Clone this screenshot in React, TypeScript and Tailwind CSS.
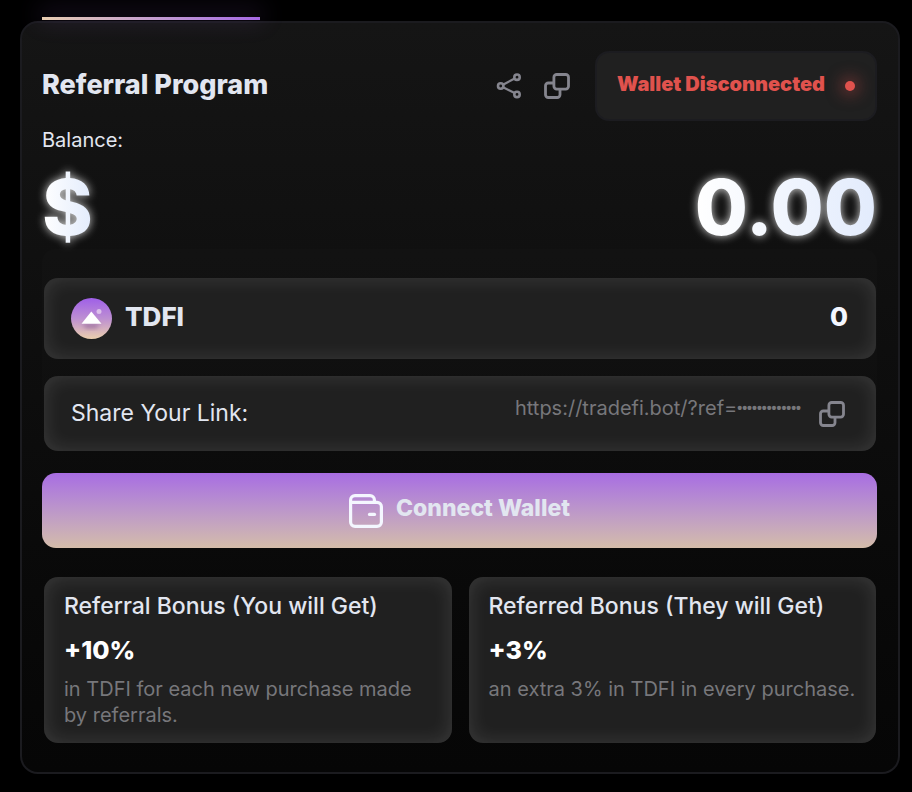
import { ReactNode } from "react";
import clsx from "clsx";

const CopyIcon = () => (
  <svg
    className="size-[26px]"
    viewBox="0 0 26 26"
    fill="none"
    stroke="currentColor"
    strokeWidth="2.8"
    strokeLinejoin="round"
    aria-hidden="true"
  >
    <rect x="9.9" y="1.5" width="14.6" height="14.6" rx="2.8" />
    <path d="M9.9 10H4.3a2.8 2.8 0 0 0-2.8 2.8v8.9a2.8 2.8 0 0 0 2.8 2.8h8.9a2.8 2.8 0 0 0 2.8-2.8v-5.6" />
  </svg>
);

const ShareIcon = () => (
  <svg
    className="size-[26px]"
    viewBox="0 0 26 26"
    fill="none"
    stroke="currentColor"
    strokeWidth="2.6"
    aria-hidden="true"
  >
    <circle cx="4.7" cy="13" r="2.7" />
    <circle cx="21" cy="4.2" r="2.7" />
    <circle cx="21" cy="21.4" r="2.7" />
    <path d="M7 11.7 18.6 5.5M7 14.3l11.6 5.8" strokeWidth="2.2" />
  </svg>
);

const WalletIcon = () => (
  <svg
    className="size-[34px]"
    viewBox="0 0 34 34"
    fill="none"
    stroke="currentColor"
    strokeWidth="3.2"
    strokeLinecap="round"
    strokeLinejoin="round"
    aria-hidden="true"
  >
    <path d="M1.6 8.4V28a4.4 4.4 0 0 0 4.4 4.4h22a4.4 4.4 0 0 0 4.4-4.4V12.8a4.4 4.4 0 0 0-4.4-4.4H1.6V6A4.4 4.4 0 0 1 6 1.6h15A4.4 4.4 0 0 1 25.4 6v2.4" />
    <path d="M20.5 20.4h5" />
  </svg>
);

const TokenIcon = () => (
  <svg className="size-[41px]" viewBox="0 0 41 41" aria-hidden="true">
    <defs>
      <linearGradient id="coin" x1="0" y1="0" x2="0" y2="1">
        <stop offset="0" stopColor="#9f5fe8" />
        <stop offset="0.5" stopColor="#bd8fd2" />
        <stop offset="1" stopColor="#ebcfad" />
      </linearGradient>
      <filter id="soft" x="-50%" y="-50%" width="200%" height="200%">
        <feGaussianBlur stdDeviation="2" />
      </filter>
    </defs>
    <circle cx="20.5" cy="20.5" r="20.5" fill="url(#coin)" />
    <path d="M11 25.5h18l-4 5H15z" fill="#7b4d86" opacity="0.5" filter="url(#soft)" />
    <path d="M20.3 13.5 30.5 25.8h-20z" fill="#fff" />
    <circle cx="28" cy="13.4" r="2.5" fill="#dcc0ea" />
  </svg>
);

type PanelProps = {
  className?: string;
  children: ReactNode;
};
const Panel = ({ className, children }: PanelProps) => (
  <div
    className={clsx(
      "rounded-[14px] bg-[#202020] shadow-[inset_0_0_20px_#ffffff20]",
      className,
    )}
  >
    {children}
  </div>
);

type BonusCardProps = {
  title: string;
  value: string;
  description: string;
};
const BonusCard = ({ title, value, description }: BonusCardProps) => (
  <Panel className="min-h-[166px] px-5 pt-[13px] pb-3">
    <h2 className="text-[23px] leading-8 font-medium">{title}</h2>
    <p className="mt-2 text-[25px] leading-10 font-extrabold text-white">
      {value}
    </p>
    <p className="mt-[6px] text-[20px] leading-[26px] text-[#77777b]">
      {description}
    </p>
  </Panel>
);

const bonuses: BonusCardProps[] = [
  {
    title: "Referral Bonus (You will Get)",
    value: "+10%",
    description: "in TDFI for each new purchase made by referrals.",
  },
  {
    title: "Referred Bonus (They will Get)",
    value: "+3%",
    description: "an extra 3% in TDFI in every purchase.",
  },
];

export default function App() {
  return (
    <main className="min-h-screen bg-black pt-[17px] pr-3 pb-[18px] pl-5 font-['Inter',sans-serif] text-[#e2e6f0]">
      <div className="relative z-10 ml-[22px] h-[3px] w-[218px] bg-linear-to-r from-[#e8cdb0] to-[#a668e4] shadow-[0_-4px_24px_4px_#a668e42e]" />
      <section className="mt-px rounded-[18px] border-2 border-[#1b1b1f] bg-linear-to-b from-[#151515] to-[#060606] pt-7 pr-[21px] pb-[29px] pl-5">
        <header className="flex items-center">
          <h1 className="grow pb-[2px] text-[27px] leading-8 font-extrabold">
            Referral Program
          </h1>
          <div className="flex items-center gap-[22px] text-[#85858e]">
            <button type="button" aria-label="Share">
              <ShareIcon />
            </button>
            <button type="button" aria-label="Copy">
              <CopyIcon />
            </button>
          </div>
          <div className="ml-[25px] flex h-[70px] items-center gap-5 rounded-[14px] border-2 border-[#1c1c20] bg-[#202020] px-5 text-[#e0524d]">
            <span className="pb-1 text-[20px] leading-6 font-black">
              Wallet Disconnected
            </span>
            <span className="size-[10px] rounded-full bg-[#e0524d] shadow-[0_0_16px_3px_#e0524d80]" />
          </div>
        </header>

        <p className="mt-[5px] text-[20px] leading-7">Balance:</p>
        <div className="flex justify-between pt-3 text-[77px] leading-[83px] font-extrabold drop-shadow-[0_0_5px_#ffffffd0]">
          <span className="bg-linear-to-r from-white to-[#e2ebfc] bg-clip-text text-transparent">
            $
          </span>
          <span className="bg-linear-to-r from-white to-[#e2ebfc] bg-clip-text text-transparent">
            0.00
          </span>
        </div>

        <div className="rounded-[14px] bg-linear-to-b from-[#121212] to-transparent pt-[29px] pr-px pl-[2px]">
          <Panel className="flex h-[81px] items-center gap-[13px] pr-7 pl-[27px] text-[26px] font-extrabold">
            <TokenIcon />
            <span className="grow pb-1">TDFI</span>
            <span className="pb-1 text-[#f4f7ff]">0</span>
          </Panel>
          <Panel className="mt-[17px] flex h-[75px] items-center pr-[31px] pl-[27px]">
            <span className="grow text-[23px]">Share Your Link:</span>
            <span className="flex items-center pb-3 text-[20px] leading-6 text-[#77777b]">
              https://tradefi.bot/?ref=
              <span className="font-['Liberation_Sans',sans-serif] text-[14px] leading-6 font-bold">
                •••••••••••••
              </span>
            </span>
            <button
              type="button"
              aria-label="Copy link"
              className="ml-[18px] text-[#85858e]"
            >
              <CopyIcon />
            </button>
          </Panel>
        </div>

        <button
          type="button"
          className="mt-[22px] flex h-[75px] w-full items-center justify-center gap-[13px] rounded-[14px] bg-linear-to-b from-[#a86ce2] to-[#d4bca9] text-[23px] font-extrabold"
        >
          <span className="text-[#f4f7ff]">
            <WalletIcon />
          </span>
          <span className="pb-1">Connect Wallet</span>
        </button>

        <div className="mt-[29px] grid grid-cols-2 gap-[17px] pr-px pl-[2px]">
          {bonuses.map((bonus) => (
            <BonusCard key={bonus.title} {...bonus} />
          ))}
        </div>
      </section>
    </main>
  );
}
